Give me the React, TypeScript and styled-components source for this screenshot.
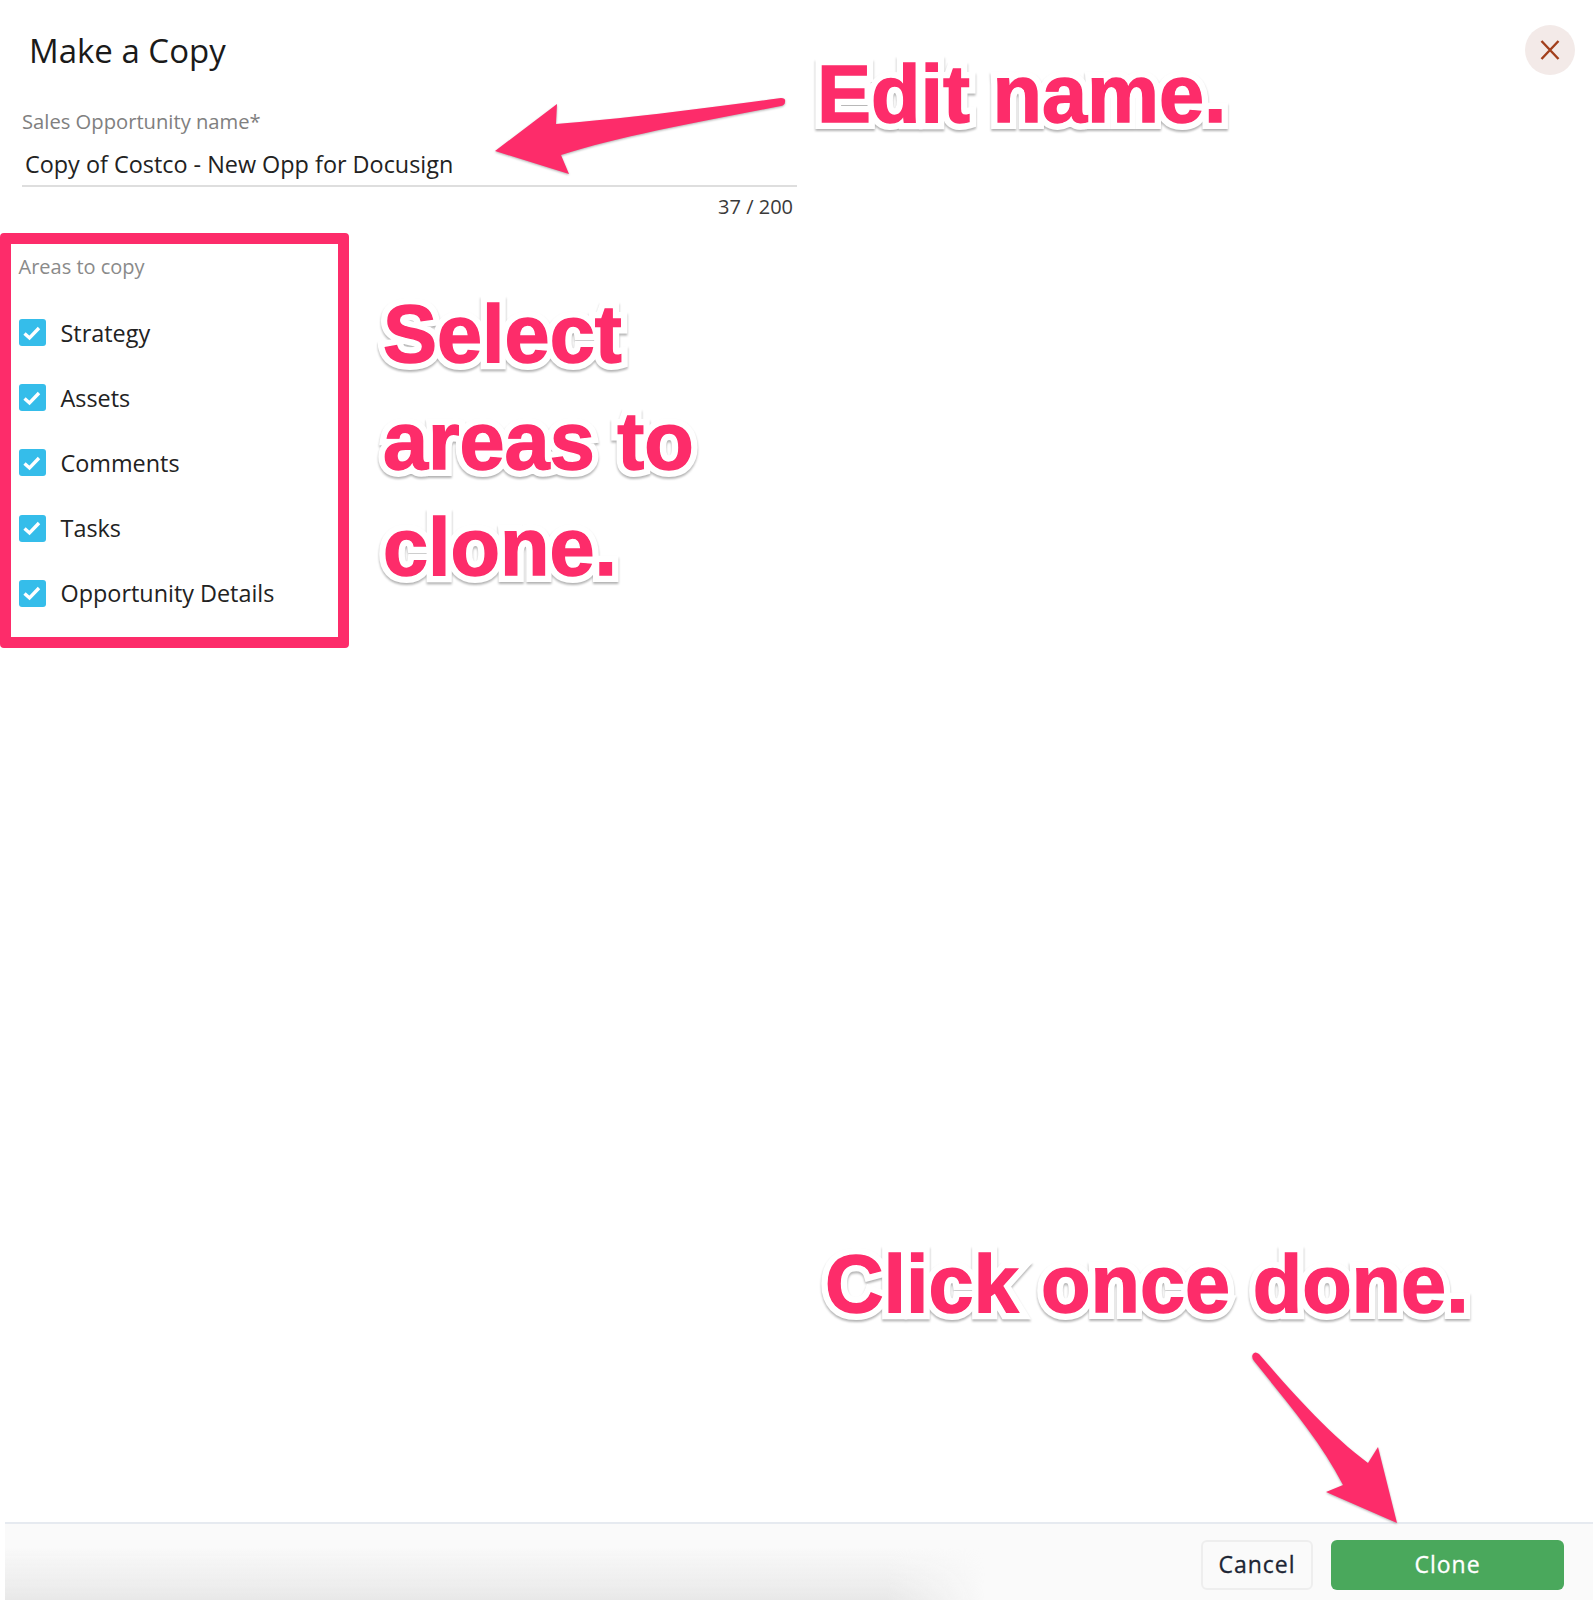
import React from 'react';
import styled, { createGlobalStyle } from 'styled-components';

const GlobalStyle = createGlobalStyle`
    html, body {
        margin: 0;
        padding: 0;
        background: #ffffff;
    }
    body {
        font-family: 'Open Sans', 'Liberation Sans', sans-serif;
    }
`;

const areas = ['Strategy', 'Assets', 'Comments', 'Tasks', 'Opportunity Details'];

const App: React.FC = () => (
    <Page>
        <GlobalStyle />
        <Header>
            <Title>Make a Copy</Title>
            <CloseButton aria-label="Close">
                <svg width="20" height="20" viewBox="0 0 20 20">
                    <path d="M1.5 1 L18.5 19 M18.5 1 L1.5 19" stroke="#a23f1c" strokeWidth="2.4" fill="none" />
                </svg>
            </CloseButton>
        </Header>
        <Field>
            <FieldLabel>Sales Opportunity name*</FieldLabel>
            <FieldValue>Copy of Costco - New Opp for Docusign</FieldValue>
            <Counter>37 / 200</Counter>
        </Field>
        <Areas>
            <AreasLabel>Areas to copy</AreasLabel>
            {areas.map((area) => (
                <AreaRow key={area}>
                    <CheckBox>
                        <svg width="18" height="18" viewBox="0 0 18 18">
                            <path d="M1.5 9.5 L6.5 14 L16 4" stroke="#ffffff" strokeWidth="3.4" fill="none" />
                        </svg>
                    </CheckBox>
                    <AreaName>{area}</AreaName>
                </AreaRow>
            ))}
        </Areas>
        <Footer>
            <CancelButton>Cancel</CancelButton>
            <CloneButton>Clone</CloneButton>
        </Footer>

        {/* screenshot annotations laid over the dialog */}
        <Frame />
        <Callout $left={817} $top={41} data-text="Edit name.">Edit name.</Callout>
        <Callout $left={383} $top={281} data-text={'Select\nareas to\nclone.'}>{'Select\nareas to\nclone.'}</Callout>
        <Callout $left={825} $top={1231} data-text="Click once done.">Click once done.</Callout>
        <ArrowSvg width="1593" height="1600" viewBox="0 0 1593 1600">
            <path
                d="M495 151 L557 104 L556 124 C620 119 710 108 781 98 Q786 98 785 102 Q785 105 781 106 C700 122 620 136 561 155 L569 174 Z"
                fill="#fd2c6a"
            />
            <path
                d="M1397 1523 L1378 1447 L1368 1463 C1330 1435 1290 1390 1259 1354 Q1255 1351 1253 1354 Q1251 1357 1254 1361 C1285 1400 1320 1440 1343 1485 L1326 1492 Z"
                fill="#fd2c6a"
            />
        </ArrowSvg>
    </Page>
);

const Page = styled.div`
    position: relative;
    width: 1593px;
    height: 1600px;
    display: flex;
    flex-direction: column;
    overflow: hidden;
    background: #ffffff;
`;

const Header = styled.header`
    display: flex;
    justify-content: space-between;
    align-items: flex-start;
    padding: 25px 18px 0 29px;
    height: 75px;
`;

const Title = styled.h1`
    margin: 4px 0 0 0;
    font-size: 33px;
    font-weight: 400;
    line-height: 44px;
    color: #1a1a1a;
`;

const CloseButton = styled.button`
    width: 50px;
    height: 50px;
    padding: 0;
    border: none;
    border-radius: 50%;
    background: #f3eae8;
    display: flex;
    align-items: center;
    justify-content: center;
`;

const Field = styled.section`
    width: 775px;
    margin: 5.5px 0 0 22px;
    display: flex;
    flex-direction: column;
`;

const FieldLabel = styled.label`
    font-size: 20.2px;
    line-height: 30px;
    color: #808080;
`;

const FieldValue = styled.div`
    padding: 12px 3px 5.5px 3px;
    font-size: 23.4px;
    line-height: 32px;
    color: #222222;
    border-bottom: 2px solid #dedede;
`;

const Counter = styled.div`
    padding: 6px 4px 0 0;
    text-align: right;
    font-size: 20px;
    line-height: 28px;
    color: #3a3a3a;
`;

const Areas = styled.section`
    margin: 30.5px 0 0 18.5px;
    display: flex;
    flex-direction: column;
`;

const AreasLabel = styled.div`
    font-size: 20px;
    line-height: 30px;
    color: #8a8a8a;
    margin-bottom: 37.5px;
`;

const AreaRow = styled.div`
    display: flex;
    align-items: center;
    gap: 15px;
    height: 27px;
    margin-bottom: 38.2px;
`;

const CheckBox = styled.span`
    width: 27px;
    height: 27px;
    border-radius: 3px;
    background: #35bdea;
    display: flex;
    align-items: center;
    justify-content: center;
`;

const AreaName = styled.span`
    font-size: 23.4px;
    line-height: 30px;
    color: #222222;
`;

const Footer = styled.footer`
    position: relative;
    margin: auto 0 0 5px;
    height: 78px;
    box-sizing: border-box;
    border-top: 2px solid #e6eaf0;
    background: #fafafa;
    display: flex;
    align-items: flex-start;
    justify-content: flex-end;
    gap: 18px;
    padding: 16px 29px 0 0;

    &::before {
        content: '';
        position: absolute;
        left: 0;
        top: 0;
        bottom: 0;
        width: 980px;
        background: linear-gradient(to bottom, rgba(232, 232, 232, 0) 30%, #e8e8e8 100%);
        -webkit-mask-image: linear-gradient(to right, #000 90%, transparent 100%);
        mask-image: linear-gradient(to right, #000 90%, transparent 100%);
    }
`;

const FooterButton = styled.button`
    height: 50px;
    box-sizing: border-box;
    border-radius: 6px;
    padding: 0 0 2px 0;
    font-family: 'Open Sans', 'Liberation Sans', sans-serif;
    font-size: 23px;
    font-weight: 500;
    letter-spacing: 1px;
    -webkit-text-stroke: 0.3px currentColor;
`;

const CancelButton = styled(FooterButton)`
    width: 112px;
    background: #fafafa;
    border: 2px solid #eeeeee;
    color: #1c2534;
`;

const CloneButton = styled(FooterButton)`
    width: 233px;
    background: #4aa85c;
    border: none;
    color: #ffffff;
`;

const Frame = styled.div`
    position: absolute;
    left: 0;
    top: 233px;
    width: 349px;
    height: 415px;
    box-sizing: border-box;
    border: 11px solid #fd2c6a;
    border-radius: 4px;
`;

const Callout = styled.div<{ $left: number; $top: number }>`
    position: absolute;
    left: ${(p) => p.$left}px;
    top: ${(p) => p.$top}px;
    font-family: 'Liberation Sans', Arial, sans-serif;
    font-size: 81px;
    font-weight: 700;
    line-height: 106.5px;
    white-space: pre;
    color: #fd2c6a;
    -webkit-text-stroke: 14px #ffffff;
    paint-order: stroke fill;
    filter: drop-shadow(0 2px 1px rgba(0, 0, 0, 0.3));

    /* a thin second pass makes the letters as heavy as the annotation font */
    &::after {
        content: attr(data-text);
        position: absolute;
        left: 0;
        top: 0;
        -webkit-text-stroke: 1.4px #fd2c6a;
    }
`;

const ArrowSvg = styled.svg`
    position: absolute;
    left: 0;
    top: 0;
    pointer-events: none;
    filter: drop-shadow(0 1px 1px rgba(0, 0, 0, 0.3));
`;

export default App;
